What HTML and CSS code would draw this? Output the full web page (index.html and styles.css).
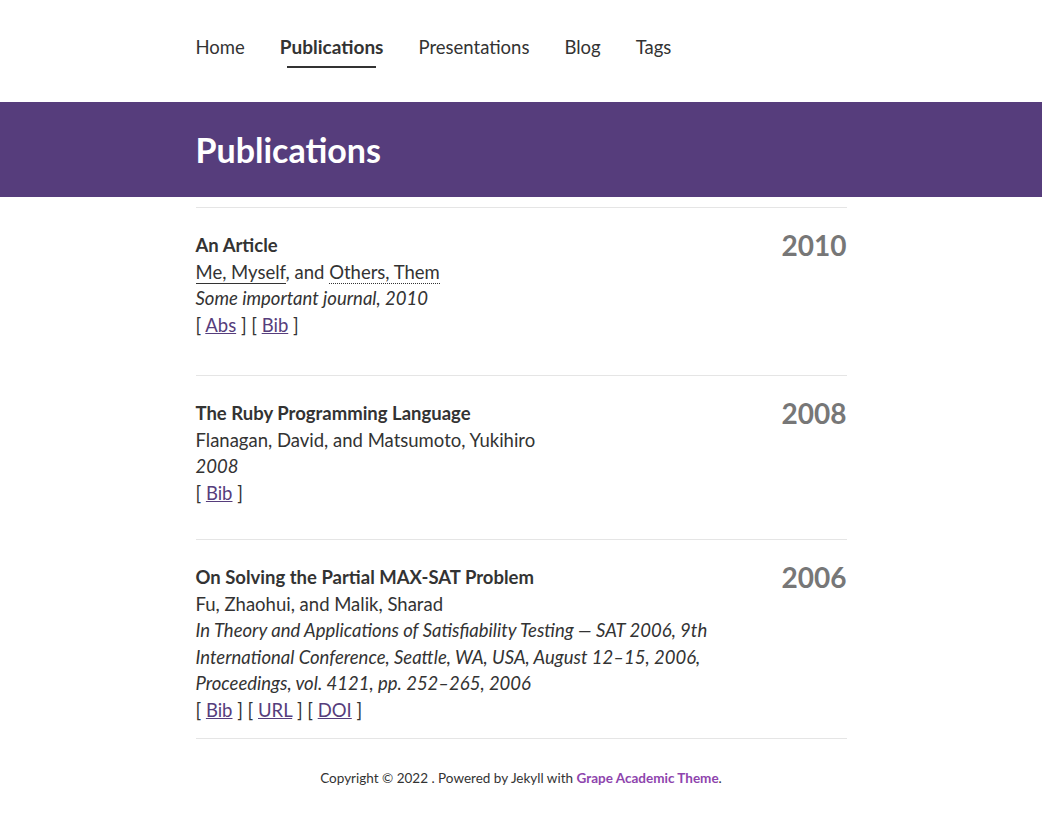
FILE: index.html
```html
<!DOCTYPE html>
<html lang="en">
<head>
<meta charset="utf-8">
<title>Publications</title>
<link rel="stylesheet" href="styles.css">
</head>
<body>
<header class="site-header">
  <nav class="container nav">
    <a class="nav-link" href="#">Home</a>
    <a class="nav-link active" href="#">Publications</a>
    <a class="nav-link" href="#">Presentations</a>
    <a class="nav-link" href="#">Blog</a>
    <a class="nav-link" href="#">Tags</a>
  </nav>
</header>
<section class="banner">
  <div class="container">
    <h1 class="banner-title">Publications</h1>
  </div>
</section>
<main class="container">
  <ul class="pubs">
    <li class="pub pub-first">
      <div class="pub-body">
        <div class="pub-title">An Article</div>
        <div class="pub-authors"><span class="me">Me, Myself</span>, and <span class="other">Others, Them</span></div>
        <div class="pub-venue">Some important journal, 2010</div>
        <div class="pub-links">[ <a href="#">Abs</a> ] [ <a href="#">Bib</a> ]</div>
      </div>
      <div class="pub-year">2010</div>
    </li>
    <li class="pub">
      <div class="pub-body">
        <div class="pub-title">The Ruby Programming Language</div>
        <div class="pub-authors">Flanagan, David, and Matsumoto, Yukihiro</div>
        <div class="pub-venue">2008</div>
        <div class="pub-links">[ <a href="#">Bib</a> ]</div>
      </div>
      <div class="pub-year">2008</div>
    </li>
    <li class="pub pub-last">
      <div class="pub-body">
        <div class="pub-title">On Solving the Partial MAX-SAT Problem</div>
        <div class="pub-authors">Fu, Zhaohui, and Malik, Sharad</div>
        <div class="pub-venue">In Theory and Applications of Satisfiability Testing — SAT 2006, 9th International Conference, Seattle, WA, USA, August 12–15, 2006, Proceedings, vol. 4121, pp. 252–265, 2006</div>
        <div class="pub-links">[ <a href="#">Bib</a> ] [ <a href="#">URL</a> ] [ <a href="#">DOI</a> ]</div>
      </div>
      <div class="pub-year">2006</div>
    </li>
  </ul>
  <footer class="footer">
    Copyright © 2022 . Powered by Jekyll with <a href="#">Grape Academic Theme</a>.
  </footer>
</main>
</body>
</html>
```

FILE: styles.css
```css
* { box-sizing: border-box; }
body {
  margin: 0;
  font-family: Lato, "Noto Sans", sans-serif;
  font-size: 18.5px;
  line-height: 26.5px;
  color: #333;
  background: #fff;
}
.container {
  width: 651px;
  margin: 0 auto;
}
.site-header {
  height: 102px;
}
.nav {
  display: flex;
  gap: 35px;
  padding-top: 34px;
}
.nav-link {
  color: #333;
  text-decoration: none;
  position: relative;
  padding-bottom: 8px;
}
.nav-link.active {
  font-weight: 700;
  font-size: 19px;
}
.nav-link.active::after {
  content: "";
  position: absolute;
  left: 7px;
  right: 7px;
  top: 32px;
  height: 2px;
  background: #333;
}
.banner {
  background: #563d7c;
  height: 95px;
  display: flex;
  align-items: center;
}
.banner-title {
  margin: 0;
  color: #fff;
  font-size: 34px;
  font-weight: 700;
  line-height: 40px;
}
.pubs {
  list-style: none;
  margin: 10px 0 0;
  padding: 0;
}
.pub {
  display: flex;
  justify-content: space-between;
  border-top: 1px solid #e5e5e5;
  padding: 24px 0 37px;
}
.pub + .pub { padding-bottom: 33px; }
.pub.pub-last { padding-bottom: 15px; }
.pub-body {
  width: 560px;
}
.pub-title {
  font-weight: 700;
}
.pub-venue {
  font-style: italic;
}
.me {
  border-bottom: 1px solid #333;
}
.other {
  border-bottom: 1px dotted #333;
}
.pub-links a {
  color: #563d7c;
  text-decoration: underline;
}
.pub-year {
  font-family: Lato, sans-serif;
  font-weight: 700;
  font-size: 28px;
  line-height: 26.5px;
  color: #777;
}
.footer {
  border-top: 1px solid #e5e5e5;
  text-align: center;
  font-size: 13.5px;
  padding-top: 26px;
}
.footer a {
  color: #8e44ad;
  font-weight: 700;
  text-decoration: none;
}
```
